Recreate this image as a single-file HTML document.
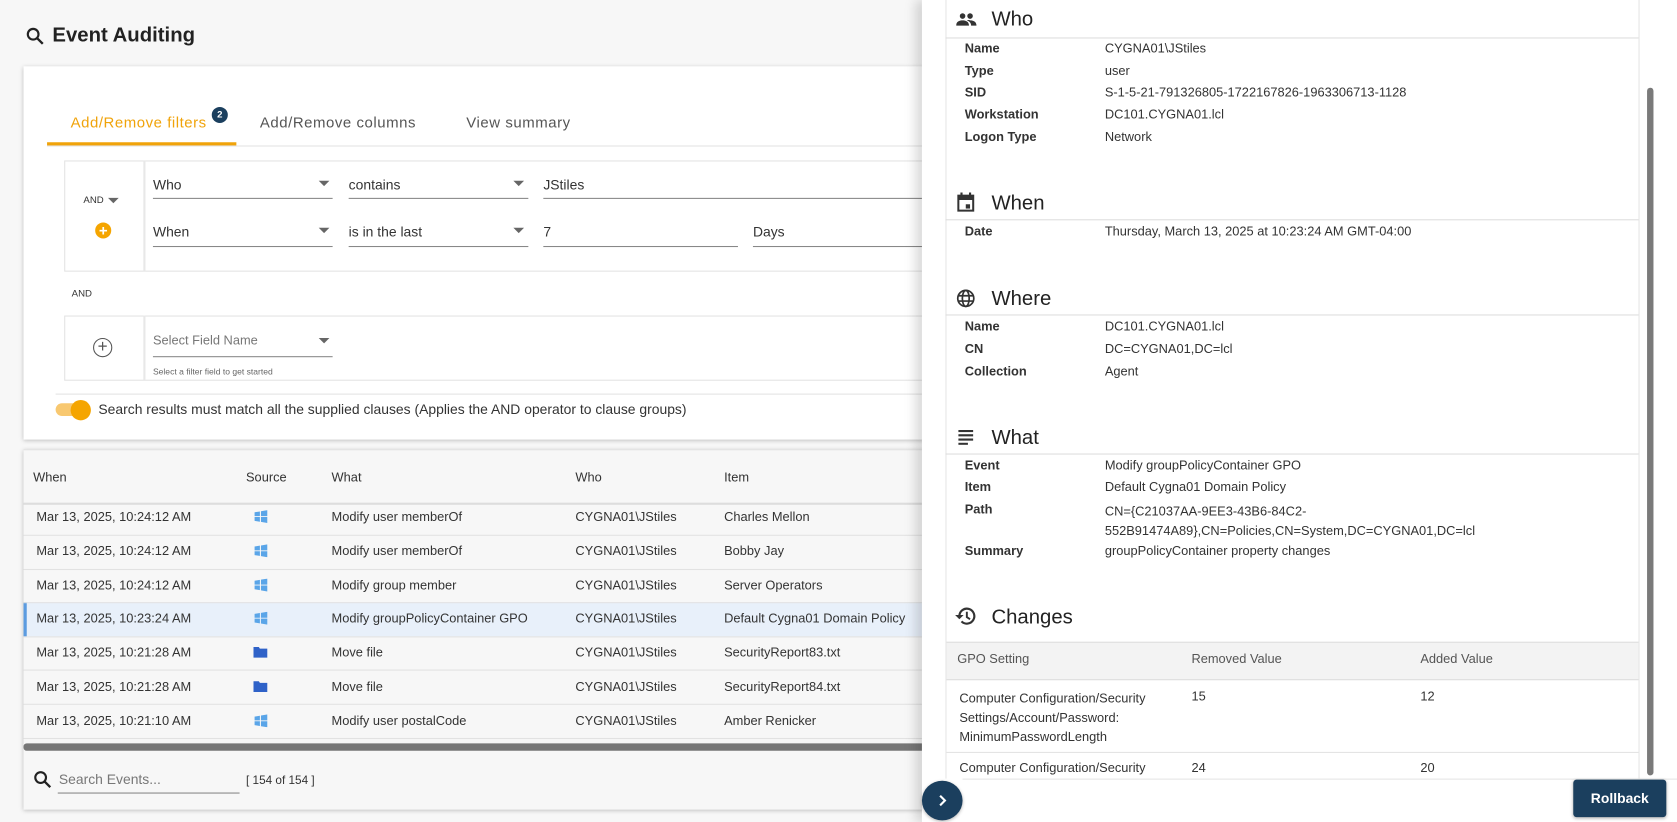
<!DOCTYPE html>
<html><head><meta charset="utf-8"><style>
*{box-sizing:border-box;margin:0;padding:0}
html,body{width:1677px;height:822px;overflow:hidden;background:#f7f7f7}
#w{position:absolute;left:0;top:0;width:1568px;height:769px;transform:scale(1.06952);transform-origin:0 0;font-family:"Liberation Sans",sans-serif;color:#333;font-size:12px}
.a{position:absolute;white-space:nowrap}
.t{font-size:12px;color:#333}
.ul{position:absolute;border-bottom:1px solid #888}
.dd{position:absolute;width:0;height:0;border-left:5px solid transparent;border-right:5px solid transparent;border-top:5px solid #666}
.lbl{font-weight:bold;font-size:12px;color:#333}
.hdr{font-size:19px;color:#222}
.line{position:absolute;left:884px;width:648px;border-top:1px solid #ddd}
.row{position:absolute;left:22px;width:850px;border-top:1px solid #e2e2e2}
</style></head><body><div id="w">
<svg class="a" style="left:24px;top:25px" width="18" height="18" viewBox="0 0 18 18"><circle cx="7" cy="7" r="5" fill="none" stroke="#222" stroke-width="2"/><line x1="10.5" y1="10.5" x2="16" y2="16" stroke="#222" stroke-width="2.2"/></svg>
<div class="a" style="left:49px;top:23px;font-size:19px;font-weight:bold;color:#222">Event Auditing</div>
<div class="a" style="left:22px;top:62px;width:860px;height:349px;background:#fff;box-shadow:0 1px 4px rgba(0,0,0,.25)"></div>
<div class="a" style="left:66px;top:106px;font-size:14px;color:#f0a30a;letter-spacing:.5px">Add/Remove filters</div>
<div class="a" style="left:198px;top:100px;width:15px;height:15px;border-radius:50%;background:#1b3f5e;color:#fff;font-size:9px;text-align:center;line-height:15px;font-weight:bold">2</div>
<div class="a" style="left:243px;top:106px;font-size:14px;color:#555;letter-spacing:.5px">Add/Remove columns</div>
<div class="a" style="left:436px;top:106px;font-size:14px;color:#555;letter-spacing:.5px">View summary</div>
<div class="a" style="left:44px;top:136px;width:840px;border-top:1px solid #e3e3e3"></div>
<div class="a" style="left:44px;top:133px;width:177px;height:3px;background:#f0a30a"></div>
<div class="a" style="left:60px;top:150px;width:830px;height:104px;border:1px solid #e3e3e3"></div>
<div class="a" style="left:134px;top:150px;height:104px;border-left:2px solid #e8e8e8"></div>
<div class="a" style="left:78px;top:182px;font-size:9px">AND</div><div class="dd" style="left:101px;top:185px"></div>
<div class="a" style="left:89px;top:208px;width:15px;height:15px;border-radius:50%;background:#f5a500;color:#fff;text-align:center;line-height:15px;font-weight:bold;font-size:14px">+</div>
<div class="a t" style="left:143px;top:165px;font-size:13px">Who</div><div class="dd" style="left:298px;top:169px"></div><div class="ul" style="left:143px;top:185px;width:168px"></div>
<div class="a t" style="left:326px;top:165px;font-size:13px">contains</div><div class="dd" style="left:480px;top:169px"></div><div class="ul" style="left:326px;top:185px;width:168px"></div>
<div class="a t" style="left:508px;top:165px;font-size:13px">JStiles</div><div class="ul" style="left:508px;top:185px;width:380px"></div>
<div class="a t" style="left:143px;top:209px;font-size:13px">When</div><div class="dd" style="left:298px;top:213px"></div><div class="ul" style="left:143px;top:230px;width:168px"></div>
<div class="a t" style="left:326px;top:209px;font-size:13px">is in the last</div><div class="dd" style="left:480px;top:213px"></div><div class="ul" style="left:326px;top:230px;width:168px"></div>
<div class="a t" style="left:508px;top:209px;font-size:13px">7</div><div class="ul" style="left:508px;top:230px;width:182px"></div>
<div class="a t" style="left:704px;top:209px;font-size:13px">Days</div><div class="ul" style="left:704px;top:230px;width:180px"></div>
<div class="a" style="left:67px;top:269px;font-size:9px">AND</div>
<div class="a" style="left:60px;top:295px;width:830px;height:61px;border:1px solid #e3e3e3"></div>
<div class="a" style="left:134px;top:295px;height:61px;border-left:2px solid #e8e8e8"></div>
<div class="a" style="left:87px;top:316px;width:18px;height:18px;border-radius:50%;border:1.5px solid #555;text-align:center;line-height:15px;font-size:16px;color:#555">+</div>
<div class="a" style="left:143px;top:311px;font-size:12px;color:#777">Select Field Name</div><div class="dd" style="left:298px;top:316px"></div><div class="ul" style="left:143px;top:333px;width:168px"></div>
<div class="a" style="left:143px;top:343px;font-size:8px;color:#666">Select a filter field to get started</div>
<div class="a" style="left:52px;top:368px;width:840px;border-top:1px solid #e3e3e3"></div>
<div class="a" style="left:52px;top:377px;width:28px;height:12px;border-radius:6px;background:#f8c870"></div>
<div class="a" style="left:66px;top:374px;width:19px;height:19px;border-radius:50%;background:#f5a500"></div>
<div class="a" style="left:92px;top:375px;font-size:13px;color:#333">Search results must match all the supplied clauses (Applies the AND operator to clause groups)</div>
<div class="a" style="left:22px;top:420px;width:860px;height:337px;background:#f7f7f7;box-shadow:0 1px 4px rgba(0,0,0,.25)"></div>
<div class="a" style="left:22px;top:420px;width:860px;border-top:1px solid #e2e2e2"></div>
<div class="a t" style="left:31px;top:439px">When</div><div class="a t" style="left:230px;top:439px">Source</div><div class="a t" style="left:310px;top:439px">What</div><div class="a t" style="left:538px;top:439px">Who</div><div class="a t" style="left:677px;top:439px">Item</div>
<div class="row" style="top:470px;border-top:2px solid #ddd"></div>
<div class="a" style="left:22px;top:563px;width:850px;height:32px;background:#e8f0fa;border-left:3px solid #5b9be0"></div>
<div class="row" style="top:500px"></div><div class="row" style="top:532px"></div><div class="row" style="top:563px"></div><div class="row" style="top:595px"></div><div class="row" style="top:626px"></div><div class="row" style="top:658px"></div><div class="row" style="top:690px"></div>
<div class="a" style="left:22px;top:695px;width:850px;height:7px;background:#777;border-radius:3px"></div>
<div class="a t" style="left:34px;top:476px">Mar 13, 2025, 10:24:12 AM</div><div class="a t" style="left:310px;top:476px">Modify user memberOf</div><div class="a t" style="left:538px;top:476px">CYGNA01\JStiles</div><div class="a t" style="left:677px;top:476px">Charles Mellon</div>
<div class="a t" style="left:34px;top:508px">Mar 13, 2025, 10:24:12 AM</div><div class="a t" style="left:310px;top:508px">Modify user memberOf</div><div class="a t" style="left:538px;top:508px">CYGNA01\JStiles</div><div class="a t" style="left:677px;top:508px">Bobby Jay</div>
<div class="a t" style="left:34px;top:540px">Mar 13, 2025, 10:24:12 AM</div><div class="a t" style="left:310px;top:540px">Modify group member</div><div class="a t" style="left:538px;top:540px">CYGNA01\JStiles</div><div class="a t" style="left:677px;top:540px">Server Operators</div>
<div class="a t" style="left:34px;top:571px">Mar 13, 2025, 10:23:24 AM</div><div class="a t" style="left:310px;top:571px">Modify groupPolicyContainer GPO</div><div class="a t" style="left:538px;top:571px">CYGNA01\JStiles</div><div class="a t" style="left:677px;top:571px">Default Cygna01 Domain Policy</div>
<div class="a t" style="left:34px;top:603px">Mar 13, 2025, 10:21:28 AM</div><div class="a t" style="left:310px;top:603px">Move file</div><div class="a t" style="left:538px;top:603px">CYGNA01\JStiles</div><div class="a t" style="left:677px;top:603px">SecurityReport83.txt</div>
<div class="a t" style="left:34px;top:635px">Mar 13, 2025, 10:21:28 AM</div><div class="a t" style="left:310px;top:635px">Move file</div><div class="a t" style="left:538px;top:635px">CYGNA01\JStiles</div><div class="a t" style="left:677px;top:635px">SecurityReport84.txt</div>
<div class="a t" style="left:34px;top:667px">Mar 13, 2025, 10:21:10 AM</div><div class="a t" style="left:310px;top:667px">Modify user postalCode</div><div class="a t" style="left:538px;top:667px">CYGNA01\JStiles</div><div class="a t" style="left:677px;top:667px">Amber Renicker</div>
<svg class="a" style="left:238px;top:477px" width="12" height="12" viewBox="0 0 12 12"><path d="M0 2l5-.8V5.6H0zM6 1l6-1v5.6H6zM0 6.4h5v4.4L0 10zM6 6.4h6V12l-6-1z" fill="#5aa5e8"/></svg>
<svg class="a" style="left:238px;top:509px" width="12" height="12" viewBox="0 0 12 12"><path d="M0 2l5-.8V5.6H0zM6 1l6-1v5.6H6zM0 6.4h5v4.4L0 10zM6 6.4h6V12l-6-1z" fill="#5aa5e8"/></svg>
<svg class="a" style="left:238px;top:541px" width="12" height="12" viewBox="0 0 12 12"><path d="M0 2l5-.8V5.6H0zM6 1l6-1v5.6H6zM0 6.4h5v4.4L0 10zM6 6.4h6V12l-6-1z" fill="#5aa5e8"/></svg>
<svg class="a" style="left:238px;top:572px" width="12" height="12" viewBox="0 0 12 12"><path d="M0 2l5-.8V5.6H0zM6 1l6-1v5.6H6zM0 6.4h5v4.4L0 10zM6 6.4h6V12l-6-1z" fill="#5aa5e8"/></svg>
<svg class="a" style="left:238px;top:668px" width="12" height="12" viewBox="0 0 12 12"><path d="M0 2l5-.8V5.6H0zM6 1l6-1v5.6H6zM0 6.4h5v4.4L0 10zM6 6.4h6V12l-6-1z" fill="#5aa5e8"/></svg>
<svg class="a" style="left:237px;top:604px" width="13" height="11" viewBox="0 0 13 11"><path d="M0 1h5l1 1.5h7V11H0z" fill="#2f62c8"/></svg>
<svg class="a" style="left:237px;top:636px" width="13" height="11" viewBox="0 0 13 11"><path d="M0 1h5l1 1.5h7V11H0z" fill="#2f62c8"/></svg>
<svg class="a" style="left:31px;top:720px" width="18" height="18" viewBox="0 0 18 18"><circle cx="7" cy="7" r="5" fill="none" stroke="#222" stroke-width="2"/><line x1="10.5" y1="10.5" x2="16" y2="16" stroke="#222" stroke-width="2.2"/></svg>
<div class="a" style="left:55px;top:721px;font-size:13px;color:#777">Search Events...</div>
<div class="ul" style="left:54px;top:741px;width:170px"></div>
<div class="a t" style="left:230px;top:724px;font-size:11px">[ 154 of 154 ]</div>
<div class="a" style="left:862px;top:0;width:710px;height:769px;background:#fff;box-shadow:-6px 0 10px rgba(0,0,0,.15)"></div>
<div class="a" style="left:884px;top:0;width:649px;height:728px;border-left:1px solid #e5e5e5;border-right:1px solid #e5e5e5"></div>
<div class="a" style="left:1540px;top:82px;width:6px;height:643px;background:#7a7a7a;border-radius:3px"></div>
<svg class="a" style="left:894px;top:12px" width="20" height="14" viewBox="0 0 20 14"><circle cx="6" cy="3" r="2.6" fill="#333"/><circle cx="13" cy="3" r="2.6" fill="#333"/><path d="M0 12c0-4 3-5 6-5s6 1 6 5zM10 7c2-.6 3 0 3 0 3 0 6 1 6 5h-5c0-2-1-4-4-5z" fill="#333"/></svg>
<div class="a hdr" style="left:927px;top:8px">Who</div>
<div class="line" style="top:35px"></div>
<div class="a lbl" style="left:902px;top:38px">Name</div><div class="a t" style="left:1033px;top:38px">CYGNA01\JStiles</div>
<div class="a lbl" style="left:902px;top:59px">Type</div><div class="a t" style="left:1033px;top:59px">user</div>
<div class="a lbl" style="left:902px;top:79px">SID</div><div class="a t" style="left:1033px;top:79px">S-1-5-21-791326805-1722167826-1963306713-1128</div>
<div class="a lbl" style="left:902px;top:100px">Workstation</div><div class="a t" style="left:1033px;top:100px">DC101.CYGNA01.lcl</div>
<div class="a lbl" style="left:902px;top:121px">Logon Type</div><div class="a t" style="left:1033px;top:121px">Network</div>
<svg class="a" style="left:895px;top:180px" width="16" height="18" viewBox="0 0 16 18"><rect x="1" y="3" width="14" height="14" fill="none" stroke="#333" stroke-width="2"/><rect x="1" y="3" width="14" height="4" fill="#333"/><rect x="3" y="0" width="2" height="4" fill="#333"/><rect x="11" y="0" width="2" height="4" fill="#333"/><rect x="8" y="11" width="4" height="4" fill="#333"/></svg>
<div class="a hdr" style="left:927px;top:180px">When</div>
<div class="line" style="top:205px"></div>
<div class="a lbl" style="left:902px;top:209px">Date</div><div class="a t" style="left:1033px;top:209px">Thursday, March 13, 2025 at 10:23:24 AM GMT-04:00</div>
<svg class="a" style="left:894px;top:270px" width="18" height="18" viewBox="0 0 18 18"><g fill="none" stroke="#333" stroke-width="1.6"><circle cx="9" cy="9" r="7.5"/><ellipse cx="9" cy="9" rx="3.2" ry="7.5"/><line x1="1.5" y1="6.5" x2="16.5" y2="6.5"/><line x1="1.5" y1="11.5" x2="16.5" y2="11.5"/></g></svg>
<div class="a hdr" style="left:927px;top:269px">Where</div>
<div class="line" style="top:294px"></div>
<div class="a lbl" style="left:902px;top:298px">Name</div><div class="a t" style="left:1033px;top:298px">DC101.CYGNA01.lcl</div>
<div class="a lbl" style="left:902px;top:319px">CN</div><div class="a t" style="left:1033px;top:319px">DC=CYGNA01,DC=lcl</div>
<div class="a lbl" style="left:902px;top:340px">Collection</div><div class="a t" style="left:1033px;top:340px">Agent</div>
<svg class="a" style="left:896px;top:402px" width="14" height="14" viewBox="0 0 14 14"><g fill="#333"><rect y="0" width="14" height="2"/><rect y="4" width="14" height="2"/><rect y="8" width="14" height="2"/><rect y="12" width="9" height="2"/></g></svg>
<div class="a hdr" style="left:927px;top:399px">What</div>
<div class="line" style="top:424px"></div>
<div class="a lbl" style="left:902px;top:428px">Event</div><div class="a t" style="left:1033px;top:428px">Modify groupPolicyContainer GPO</div>
<div class="a lbl" style="left:902px;top:448px">Item</div><div class="a t" style="left:1033px;top:448px">Default Cygna01 Domain Policy</div>
<div class="a lbl" style="left:902px;top:469px">Path</div><div class="a t" style="left:1033px;top:469px;line-height:18px">CN={C21037AA-9EE3-43B6-84C2-<br>552B91474A89},CN=Policies,CN=System,DC=CYGNA01,DC=lcl</div>
<div class="a lbl" style="left:902px;top:508px">Summary</div><div class="a t" style="left:1033px;top:508px">groupPolicyContainer property changes</div>
<svg class="a" style="left:893px;top:567px" width="20" height="18" viewBox="0 0 20 18"><path d="M4 9a7 7 0 1 1 2 5" fill="none" stroke="#333" stroke-width="2"/><path d="M0 8h8l-4 4z" fill="#333"/><path d="M11 5v5l3 2" fill="none" stroke="#333" stroke-width="1.8"/></svg>
<div class="a hdr" style="left:927px;top:567px">Changes</div>
<div class="a" style="left:885px;top:600px;width:647px;height:36px;background:#f3f3f3;border-top:1px solid #ddd;border-bottom:1px solid #ddd"></div>
<div class="a" style="left:895px;top:609px;color:#555">GPO Setting</div><div class="a" style="left:1114px;top:609px;color:#555">Removed Value</div><div class="a" style="left:1328px;top:609px;color:#555">Added Value</div>
<div class="a t" style="left:897px;top:644px;line-height:18px">Computer Configuration/Security<br>Settings/Account/Password:<br>MinimumPasswordLength</div>
<div class="a t" style="left:1114px;top:644px">15</div><div class="a t" style="left:1328px;top:644px">12</div>
<div class="a" style="left:885px;top:703px;width:647px;border-top:1px solid #e3e3e3"></div>
<div class="a t" style="left:897px;top:711px">Computer Configuration/Security</div><div class="a t" style="left:1114px;top:711px">24</div><div class="a t" style="left:1328px;top:711px">20</div>
<div class="a" style="left:900px;top:728px;width:672px;height:41px;background:#fff;border-top:1px solid #e5e5e5"></div>
<div class="a" style="left:1471px;top:729px;width:87px;height:35px;background:#1b3f5e;border-radius:3px;box-shadow:0 1px 3px rgba(0,0,0,.3);color:#fff;font-weight:bold;font-size:13px;text-align:center;line-height:35px">Rollback</div>
<div class="a" style="left:862px;top:730px;width:38px;height:37px;border-radius:50%;background:#1b3f5e;box-shadow:0 1px 3px rgba(0,0,0,.3)"></div>
<svg class="a" style="left:875px;top:742px" width="12" height="13" viewBox="0 0 12 13"><path d="M4 2l4.5 4.5L4 11" fill="none" stroke="#fff" stroke-width="2"/></svg>
</div></body></html>
